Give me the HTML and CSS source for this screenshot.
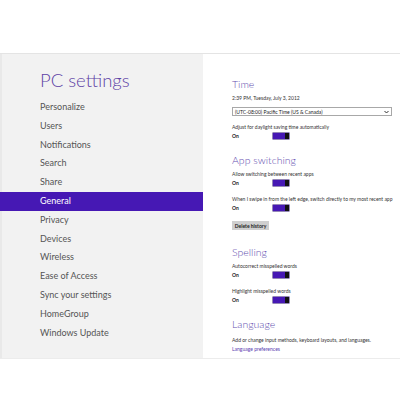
FILE: index.html
```html
<!DOCTYPE html>
<html lang="en">
<head>
    <meta charset="UTF-8">
    <title>PC settings</title>
    <link rel="stylesheet" href="styles.css">
</head>
<body>
    <div class="screen">
        <div class="nav">
            <h1>PC settings</h1>
            <ul class="nav-list">
                <li>Personalize</li>
                <li>Users</li>
                <li>Notifications</li>
                <li>Search</li>
                <li>Share</li>
                <li class="active">General</li>
                <li>Privacy</li>
                <li>Devices</li>
                <li>Wireless</li>
                <li>Ease of Access</li>
                <li>Sync your settings</li>
                <li>HomeGroup</li>
                <li>Windows Update</li>
            </ul>
        </div>

        <div class="content">
            <div class="section first">
                <h2>Time</h2>
                <p class="small">2:39 PM, Tuesday, July 3, 2012</p>
                <div class="dropdown">
                    <span>(UTC-08:00) Pacific Time (US &amp; Canada)</span>
                    <svg class="chevron" width="5" height="4" viewBox="0 0 5 4"><path d="M0.5 1 L2.5 3 L4.5 1" fill="none" stroke="#333" stroke-width="1"/></svg>
                </div>
                <div class="setting">
                    <p class="small">Adjust for daylight saving time automatically</p>
                    <div class="toggle-row"><span>On</span><span class="toggle"></span></div>
                </div>
            </div>

            <div class="section">
                <h2>App switching</h2>
                <div class="setting tight">
                    <p class="small">Allow switching between recent apps</p>
                    <div class="toggle-row"><span>On</span><span class="toggle"></span></div>
                </div>
                <div class="setting">
                    <p class="small">When I swipe in from the left edge, switch directly to my most recent app</p>
                    <div class="toggle-row"><span>On</span><span class="toggle"></span></div>
                </div>
                <button class="btn">Delete history</button>
            </div>

            <div class="section spaced">
                <h2>Spelling</h2>
                <div class="setting tight">
                    <p class="small">Autocorrect misspelled words</p>
                    <div class="toggle-row"><span>On</span><span class="toggle"></span></div>
                </div>
                <div class="setting">
                    <p class="small">Highlight misspelled words</p>
                    <div class="toggle-row"><span>On</span><span class="toggle"></span></div>
                </div>
            </div>

            <div class="section">
                <h2>Language</h2>
                <p class="small desc">Add or change input methods, keyboard layouts, and languages.</p>
                <a class="small link">Language preferences</a>
            </div>
        </div>
    </div>
</body>
</html>
```

FILE: styles.css
```css
:root {
    --purple: #4618b4;
    --heading: #6550b0;
    --panel: #f2f2f2;
    --text: #3a3a3a;
}

* {
    margin: 0;
    padding: 0;
    box-sizing: border-box;
}

body {
    font-family: Lato, "Open Sans", sans-serif;
    background: #fff;
    color: var(--text);
}

.screen {
    display: flex;
    margin-top: 53px;
    height: 306px;
    border-top: 1px solid #e4e4e4;
    border-bottom: 1px solid #ececec;
}

.nav {
    flex: 0 0 203px;
    background: var(--panel);
    border-left: 2px solid #e9e9e9;
    padding-top: 14px;
}

.nav h1 {
    font-weight: 300;
    font-size: 18.5px;
    line-height: 24px;
    color: #5e42a6;
    padding-left: 38px;
    margin-bottom: 6px;
}

.nav-list {
    list-style: none;
}

.nav-list li {
    font-size: 9px;
    line-height: 18.8px;
    padding-left: 38px;
    color: #555;
}

.nav-list li.active {
    background: var(--purple);
    color: #fff;
    margin-left: -2px;
    padding-left: 40px;
}

.content {
    flex: 1;
    min-width: 0;
    overflow: hidden;
    padding: 22px 8px 0 29px;
}

.section {
    margin-top: 12px;
}

.section.first {
    margin-top: 0;
}

.section.spaced {
    margin-top: 14px;
}

.section h2 {
    font-weight: 300;
    font-size: 10.5px;
    line-height: 16px;
    color: var(--heading);
    margin-bottom: 2px;
}

.small {
    font-size: 5px;
    line-height: 8px;
    color: #333;
    white-space: nowrap;
}

.dropdown {
    display: flex;
    align-items: center;
    justify-content: space-between;
    margin-top: 5px;
    height: 9px;
    width: 160px;
    border: 1px solid #a8a8a8;
    padding: 0 2px;
    font-size: 5px;
    color: #222;
}

.setting {
    margin-top: 7px;
}

.setting.tight {
    margin-top: 0;
}

.section .setting + .setting {
    margin-top: 8px;
}

.toggle-row {
    display: flex;
    align-items: center;
    margin-top: 1px;
    height: 8px;
    font-size: 5px;
    font-weight: 700;
    color: #222;
}

.toggle-row span:first-child {
    width: 41px;
}

.toggle {
    width: 16px;
    height: 6px;
    background: var(--purple);
    border-right: 4px solid #111;
    box-shadow: 0 0 0 0.5px #2a1070;
}

.btn {
    display: block;
    margin-top: 9px;
    width: 37px;
    height: 9px;
    border: none;
    background: #cfcfcf;
    font-family: inherit;
    font-size: 5px;
    font-weight: 700;
    color: #222;
}

.desc {
    margin-top: 4px;
}

.link {
    display: block;
    margin-top: 1px;
    color: #5a3bb0;
}
```
